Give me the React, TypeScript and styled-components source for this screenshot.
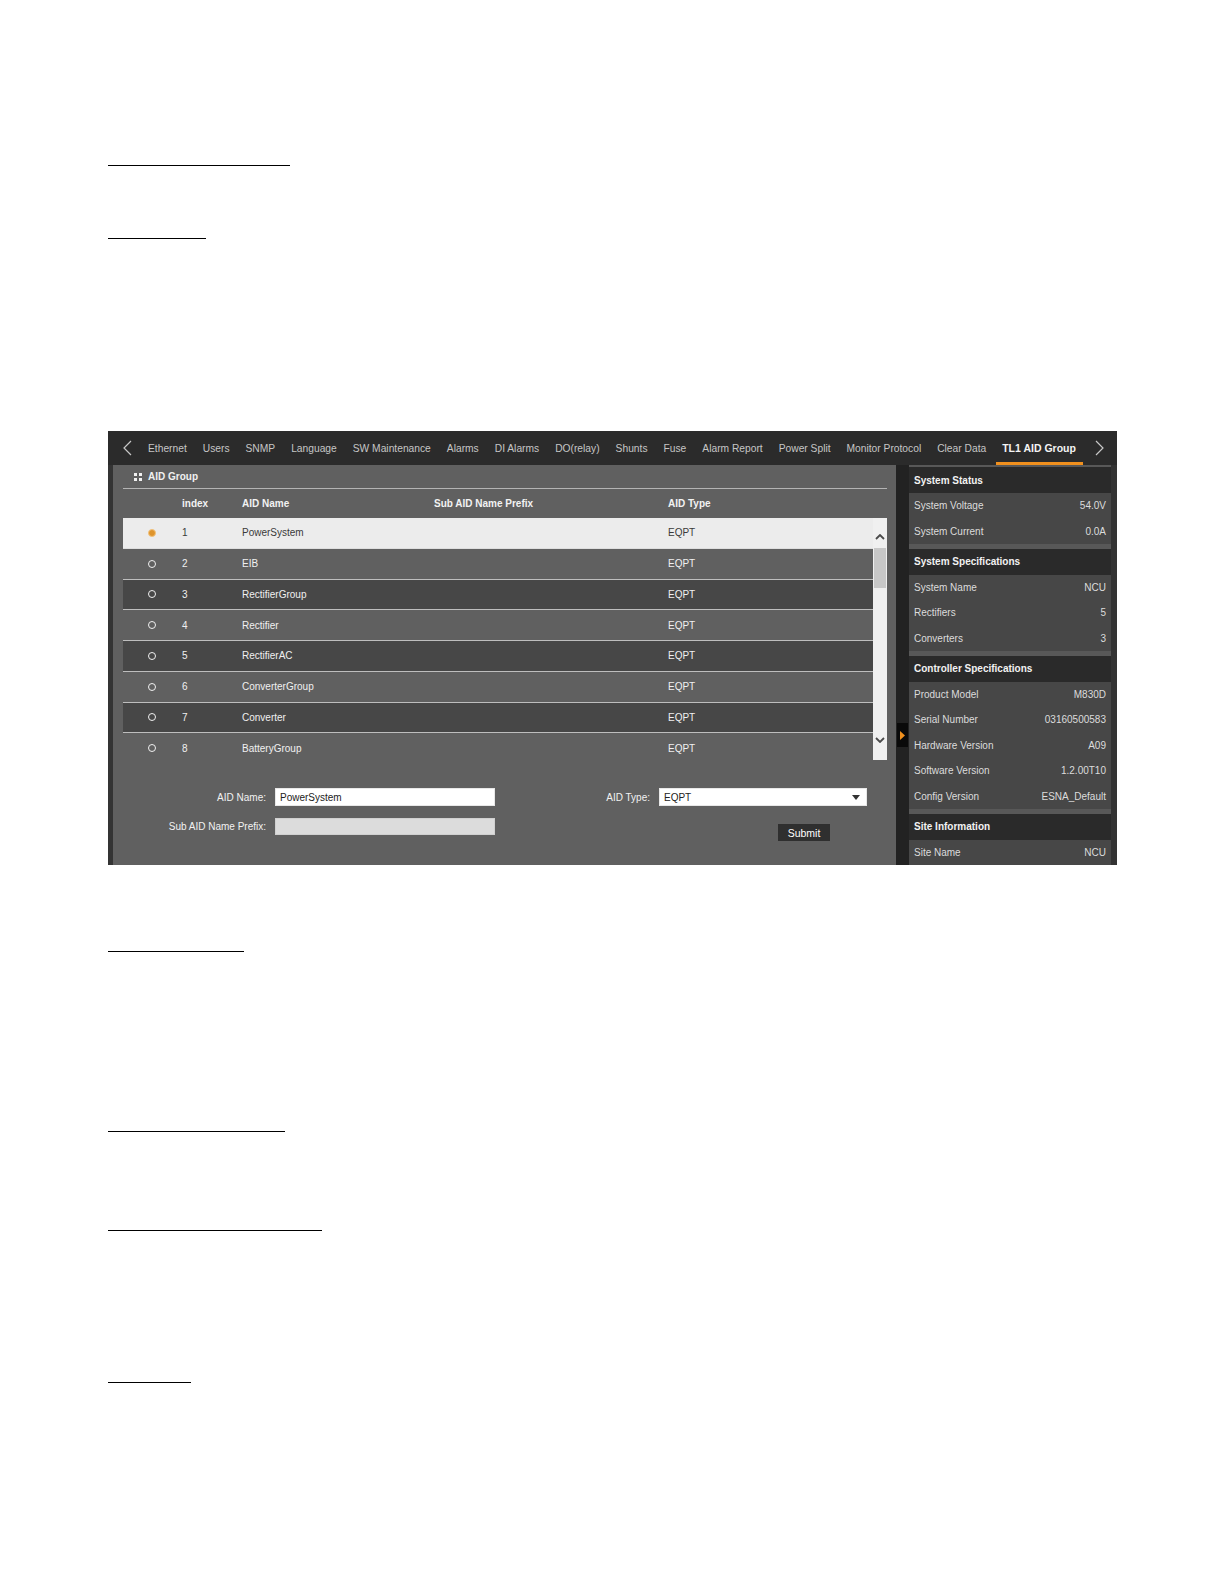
import React from 'react';
import styled, { createGlobalStyle, css } from 'styled-components';

const GlobalStyle = createGlobalStyle`
  body {
    margin: 0;
    background: #ffffff;
    font-family: "Liberation Sans", Arial, sans-serif;
  }
`;

const Page = styled.div`
  width: 1224px;
  min-height: 1584px;
  box-sizing: border-box;
  padding: 164.5px 0 0 108px;
  background: #fff;
`;

const Rule = styled.div<{ $w: number; $mt: number }>`
  width: ${(p) => p.$w}px;
  height: 1.5px;
  margin-top: ${(p) => p.$mt}px;
  background: #000;
`;

const Frame = styled.div`
  width: 1009px;
  height: 434px;
  margin-top: 192px;
  background: #2b2b2b;
  display: flex;
  flex-direction: column;
  font-size: 10px;
`;

const NavBar = styled.div`
  height: 34px;
  flex: none;
  display: flex;
  align-items: stretch;
  padding-left: 15px;
  background: #2b2b2b;
`;

const NavArrow = styled.div<{ $right?: boolean }>`
  display: flex;
  align-items: center;
  width: ${(p) => (p.$right ? 'auto' : '17px')};
  margin-left: ${(p) => (p.$right ? '11px' : '0')};
`;

const Tab = styled.div<{ $active?: boolean }>`
  position: relative;
  display: flex;
  align-items: center;
  padding: 0 8px;
  color: #c6c6c6;
  font-size: 10.25px;
  white-space: nowrap;
  ${(p) =>
    p.$active &&
    css`
      color: #f4f4f4;
      font-weight: bold;
      font-size: 10.5px;
      &::after {
        content: '';
        position: absolute;
        left: 2px;
        right: 1px;
        bottom: 0;
        height: 3px;
        background: #f0901e;
      }
    `}
`;

const Body = styled.div`
  flex: 1;
  display: flex;
  min-height: 0;
`;

const LeftEdge = styled.div`
  width: 5px;
  background: #343434;
`;

const Main = styled.div`
  width: 783px;
  box-sizing: border-box;
  padding: 0 9px 0 10px;
  background: #606060;
  display: flex;
  flex-direction: column;
`;

const PanelTitle = styled.div`
  height: 23px;
  display: flex;
  align-items: center;
  gap: 6px;
  padding-left: 11px;
  color: #f0f0f0;
  font-weight: bold;
`;

const Divider = styled.div`
  height: 1px;
  background: #b4b4b4;
`;

const columns = css`
  display: grid;
  grid-template-columns: 59px 60px 192px 234px 1fr;
  align-items: center;
`;

const HeadRow = styled.div`
  ${columns};
  height: 29px;
  color: #f2f2f2;
  font-weight: bold;
`;

const TableBody = styled.div`
  height: 242px;
  display: flex;
`;

const Rows = styled.div`
  flex: 1;
  overflow: hidden;
`;

type Tone = 'sel' | 'light' | 'dark';

const Row = styled.div<{ $tone: Tone }>`
  ${columns};
  height: 30.75px;
  box-sizing: border-box;
  border-bottom: 1px solid ${(p) => (p.$tone === 'sel' ? '#dedede' : '#bebebe')};
  background: ${(p) => (p.$tone === 'sel' ? '#ececec' : p.$tone === 'dark' ? '#474747' : '#606060')};
  color: ${(p) => (p.$tone === 'sel' ? '#3a3a3a' : '#f0f0f0')};
`;

const RadioCell = styled.div`
  padding-left: 25px;
  display: flex;
  align-items: center;
`;

const Radio = styled.span<{ $on?: boolean }>`
  width: 8px;
  height: 8px;
  box-sizing: border-box;
  border-radius: 50%;
  border: 1.5px solid ${(p) => (p.$on ? '#f2c27c' : '#f0f0f0')};
  background: ${(p) => (p.$on ? '#de942c' : 'transparent')};
`;

const Scrollbar = styled.div`
  width: 14px;
  background: #f0f0f0;
  display: flex;
  flex-direction: column;
  align-items: center;
`;

const ScrollArrow = styled.div<{ $down?: boolean }>`
  height: 30px;
  box-sizing: border-box;
  display: flex;
  align-items: flex-start;
  justify-content: center;
  padding-top: ${(p) => (p.$down ? '7px' : '16px')};
`;

const Thumb = styled.div`
  width: 12px;
  height: 40px;
  background: #c8c8c8;
`;

const TrackSpace = styled.div`
  flex: 1;
`;

const FormArea = styled.div`
  flex: 1;
  display: grid;
  grid-template-columns: 152px 220px 164px 208px;
  grid-template-rows: 18px 17px;
  row-gap: 12px;
  padding-top: 28px;
  align-items: center;
`;

const Label = styled.div`
  justify-self: end;
  padding-right: 9px;
  color: #f2f2f2;
  white-space: nowrap;
`;

const Input = styled.div<{ $disabled?: boolean }>`
  height: 100%;
  box-sizing: border-box;
  padding-left: 4px;
  display: flex;
  align-items: center;
  background: ${(p) => (p.$disabled ? '#dcdcdc' : '#ffffff')};
  border: 1px solid ${(p) => (p.$disabled ? '#d0d0d0' : '#e8e8e8')};
  color: #222;
`;

const Select = styled(Input)`
  justify-content: space-between;
  padding-right: 6px;
`;

const SubmitCell = styled.div`
  grid-column: 4;
  align-self: start;
  padding-left: 119px;
  padding-top: 6px;
`;

const SubmitButton = styled.button`
  width: 52px;
  height: 17px;
  padding: 0;
  border: none;
  background: #2f2f2f;
  color: #fff;
  font-family: inherit;
  font-size: 10.5px;
`;

const Gutter = styled.div`
  width: 13px;
  background: #222222;
  display: flex;
  flex-direction: column;
  align-items: center;
`;

const Toggle = styled.div`
  margin-top: 258px;
  width: 11px;
  height: 24px;
  background: #0a0a0a;
  display: flex;
  align-items: center;
  padding-left: 3px;
  box-sizing: border-box;
`;

const Sidebar = styled.div`
  width: 202px;
  padding-top: 2px;
  background: #585858;
  display: flex;
  flex-direction: column;
  gap: 4.5px;
`;

const RightEdge = styled.div`
  width: 6px;
  background: #333;
`;

const InfoSection = styled.div`
  background: #474747;
`;

const InfoHead = styled.div`
  height: 26px;
  display: flex;
  align-items: center;
  padding-left: 5px;
  background: #2a2a2a;
  color: #f2f2f2;
  font-weight: bold;
`;

const InfoRow = styled.div`
  height: 25.5px;
  display: flex;
  align-items: center;
  justify-content: space-between;
  padding: 0 5px 0 5px;
  color: #dcdcdc;
`;

const tabs = [
  'Ethernet',
  'Users',
  'SNMP',
  'Language',
  'SW Maintenance',
  'Alarms',
  'DI Alarms',
  'DO(relay)',
  'Shunts',
  'Fuse',
  'Alarm Report',
  'Power Split',
  'Monitor Protocol',
  'Clear Data',
];

const aidRows = [
  'PowerSystem',
  'EIB',
  'RectifierGroup',
  'Rectifier',
  'RectifierAC',
  'ConverterGroup',
  'Converter',
  'BatteryGroup',
];

const sections: { title: string; items: [string, string][] }[] = [
  {
    title: 'System Status',
    items: [
      ['System Voltage', '54.0V'],
      ['System Current', '0.0A'],
    ],
  },
  {
    title: 'System Specifications',
    items: [
      ['System Name', 'NCU'],
      ['Rectifiers', '5'],
      ['Converters', '3'],
    ],
  },
  {
    title: 'Controller Specifications',
    items: [
      ['Product Model', 'M830D'],
      ['Serial Number', '03160500583'],
      ['Hardware Version', 'A09'],
      ['Software Version', '1.2.00T10'],
      ['Config Version', 'ESNA_Default'],
    ],
  },
  {
    title: 'Site Information',
    items: [['Site Name', 'NCU']],
  },
];

const Chevron = ({ dir }: { dir: 'left' | 'right' }) => (
  <svg width="9" height="16" viewBox="0 0 9 16">
    <polyline
      points={dir === 'left' ? '8,1 1,8 8,15' : '1,1 8,8 1,15'}
      fill="none"
      stroke="#c8c8c8"
      strokeWidth="1.2"
    />
  </svg>
);

const ScrollChevron = ({ down }: { down?: boolean }) => (
  <svg width="10" height="6" viewBox="0 0 10 6">
    <polyline
      points={down ? '1,1 5,5 9,1' : '1,5 5,1 9,5'}
      fill="none"
      stroke="#4a4a4a"
      strokeWidth="1.8"
    />
  </svg>
);

const GridIcon = () => (
  <svg width="8" height="8" viewBox="0 0 8 8">
    <rect x="0" y="0" width="3" height="3" fill="#f0f0f0" />
    <rect x="5" y="0" width="3" height="3" fill="#f0f0f0" />
    <rect x="0" y="5" width="3" height="3" fill="#f0f0f0" />
    <rect x="5" y="5" width="3" height="3" fill="#f0f0f0" />
  </svg>
);

const AidGroupScreen: React.FC = () => (
  <Frame>
    <NavBar>
      <NavArrow>
        <Chevron dir="left" />
      </NavArrow>
      {tabs.map((t) => (
        <Tab key={t}>{t}</Tab>
      ))}
      <Tab $active>TL1 AID Group</Tab>
      <NavArrow $right>
        <Chevron dir="right" />
      </NavArrow>
    </NavBar>

    <Body>
      <LeftEdge />
      <Main>
        <PanelTitle>
          <GridIcon />
          AID Group
        </PanelTitle>
        <Divider />
        <HeadRow>
          <div />
          <div>index</div>
          <div>AID Name</div>
          <div>Sub AID Name Prefix</div>
          <div>AID Type</div>
        </HeadRow>
        <TableBody>
          <Rows>
            {aidRows.map((name, i) => (
              <Row key={name} $tone={i === 0 ? 'sel' : i % 2 === 1 ? 'light' : 'dark'}>
                <RadioCell>
                  <Radio $on={i === 0} />
                </RadioCell>
                <div>{i + 1}</div>
                <div>{name}</div>
                <div />
                <div>EQPT</div>
              </Row>
            ))}
          </Rows>
          <Scrollbar>
            <ScrollArrow>
              <ScrollChevron />
            </ScrollArrow>
            <Thumb />
            <TrackSpace />
            <ScrollArrow $down>
              <ScrollChevron down />
            </ScrollArrow>
          </Scrollbar>
        </TableBody>

        <FormArea>
          <Label>AID Name:</Label>
          <Input>PowerSystem</Input>
          <Label>AID Type:</Label>
          <Select>
            EQPT
            <svg width="8" height="5" viewBox="0 0 8 5">
              <polygon points="0,0 8,0 4,5" fill="#333" />
            </svg>
          </Select>
          <Label>Sub AID Name Prefix:</Label>
          <Input $disabled />
          <SubmitCell>
            <SubmitButton>Submit</SubmitButton>
          </SubmitCell>
        </FormArea>
      </Main>

      <Gutter>
        <Toggle>
          <svg width="5" height="9" viewBox="0 0 5 9">
            <polygon points="0,0 5,4.5 0,9" fill="#f0901e" />
          </svg>
        </Toggle>
      </Gutter>

      <Sidebar>
        {sections.map((s) => (
          <InfoSection key={s.title}>
            <InfoHead>{s.title}</InfoHead>
            {s.items.map(([k, v]) => (
              <InfoRow key={k}>
                <span>{k}</span>
                <span>{v}</span>
              </InfoRow>
            ))}
          </InfoSection>
        ))}
      </Sidebar>
      <RightEdge />
    </Body>
  </Frame>
);

export default function App() {
  return (
    <>
      <GlobalStyle />
      <Page>
        <Rule $w={182} $mt={0} />
        <Rule $w={98} $mt={71.5} />
        <AidGroupScreen />
        <Rule $w={136} $mt={85.5} />
        <Rule $w={177} $mt={178.5} />
        <Rule $w={214} $mt={97.5} />
        <Rule $w={83} $mt={150.5} />
      </Page>
    </>
  );
}
